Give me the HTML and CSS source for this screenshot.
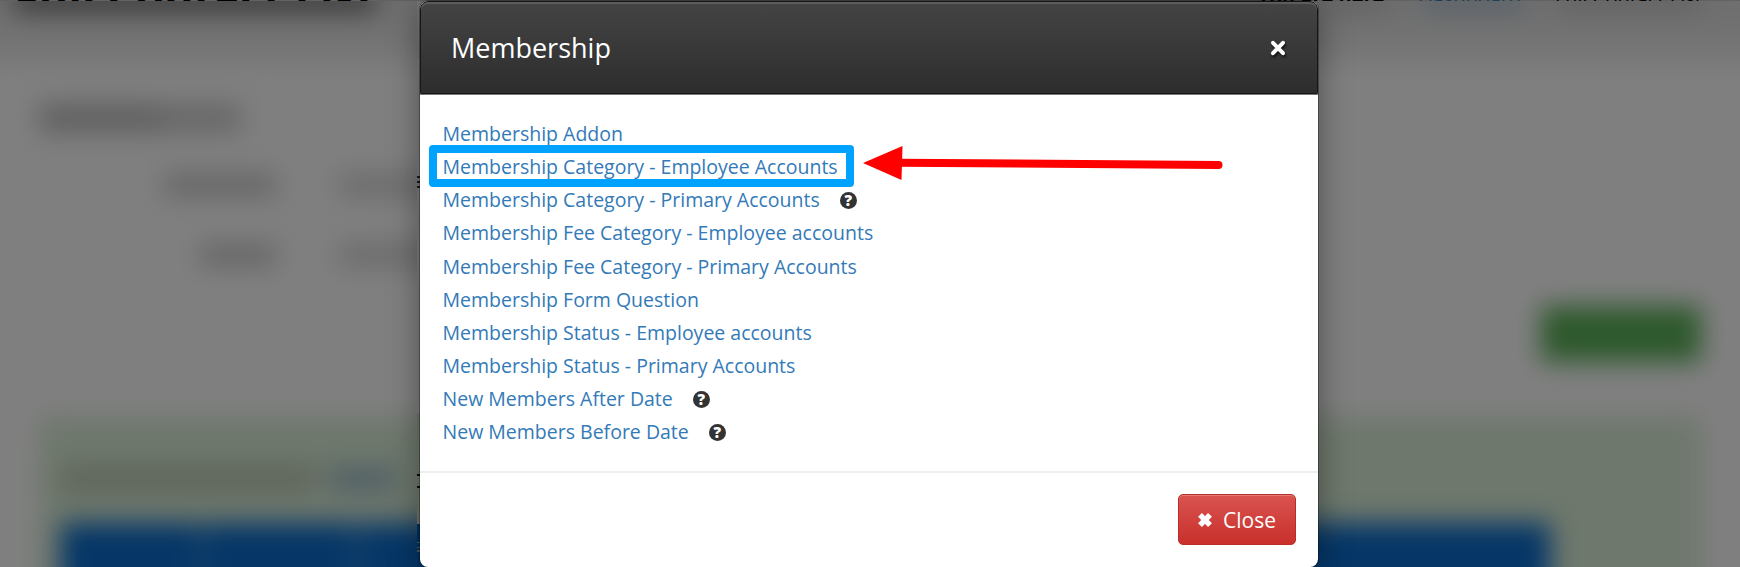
FILE: index.html
```html
<!DOCTYPE html>
<html lang="en">
<head>
    <meta charset="UTF-8">
    <meta name="viewport" content="width=device-width, initial-scale=1.0">
    <title>Membership</title>
    <link rel="stylesheet" href="styles.css">
</head>
<body>
    <!-- page behind the dialog -->
    <div class="page">
        <div class="page-blur">
            <div class="page-header">
                <i class="smudge smudge-title"></i>
                <div class="smudge-path"><i></i><i class="path-link"></i><i></i></div>
            </div>
            <div class="page-content">
                <div class="smudge-heading"><i></i><i></i></div>
                <div class="smudge-row"><i class="smudge"></i><i class="smudge wide"></i></div>
                <div class="smudge-row"><i class="smudge short"></i><i class="smudge wide"></i></div>
                <div class="page-action"></div>
                <div class="page-panel">
                    <div class="panel-text"><i></i><i class="panel-link"></i></div>
                    <div class="panel-table"></div>
                </div>
            </div>
        </div>
        <div class="page-strip">
            <span class="strip-title">Full Contact List</span>
            <span class="strip-path"><b>You are here</b> <span>:</span> <a>Dashboard</a> <span>:</span> Full Contact List</span>
        </div>
        <!-- narrow sharp column along the dialog -->
        <div class="page-edge">
            <span class="edge-field"></span>
            <span class="edge-panel"></span>
            <span class="edge-table"></span>
        </div>
    </div>

    <div class="backdrop">
        <div class="modal">
            <div class="modal-header">
                <h3>Membership</h3>
                <button type="button" class="close-icon" aria-label="Close">
                    <svg width="18" height="18" viewBox="0 0 18 18"><path d="M4 3.8L14 14.2M14 3.8L4 14.2"/></svg>
                </button>
            </div>
            <div class="modal-body">
                <ul class="filter-list">
                    <li><a href="#">Membership Addon</a></li>
                    <li><a href="#" class="marked">Membership Category - Employee Accounts</a></li>
                    <li><a href="#">Membership Category - Primary Accounts</a><span class="help">?</span></li>
                    <li><a href="#">Membership Fee Category - Employee accounts</a></li>
                    <li><a href="#">Membership Fee Category - Primary Accounts</a></li>
                    <li><a href="#">Membership Form Question</a></li>
                    <li><a href="#">Membership Status - Employee accounts</a></li>
                    <li><a href="#">Membership Status - Primary Accounts</a></li>
                    <li><a href="#">New Members After Date</a><span class="help">?</span></li>
                    <li><a href="#">New Members Before Date</a><span class="help">?</span></li>
                </ul>
                <svg class="arrow" width="362" height="36" viewBox="0 0 362 36">
                    <path class="arrow-line" d="M36 17.8L355.5 20"/>
                    <path class="arrow-head" d="M0 18L39.5 1L38.5 35Z"/>
                </svg>
            </div>
            <div class="modal-footer">
                <button type="button" class="btn-close">
                    <svg width="18" height="18" viewBox="0 0 18 18"><path d="M4 3.8L14 14.2M14 3.8L4 14.2"/></svg>
                    Close
                </button>
            </div>
        </div>
    </div>
</body>
</html>
```
FILE: styles.css
```css
* {
    box-sizing: border-box;
}
body {
    margin: 0;
    height: 567px;
    overflow: hidden;
    position: relative;
    background: #fff;
    font-family: "Open Sans", "Liberation Sans", sans-serif;
    font-size: 19.5px;
    color: #333;
}

/* page behind the dialog */
.page {
    height: 567px;
    overflow: hidden;
    position: relative;
    isolation: isolate;
    background: #fff;
}
.page-blur {
    height: 640px;
    filter: blur(13px);
}
.page-header {
    display: flex;
    justify-content: space-between;
    height: 62px;
    margin: 0 -40px;
    padding: 0 80px 0 54px;
    background: linear-gradient(#dcdcdc, #ececec);
    box-shadow: 0 -30px 0 #dcdcdc;
}
.smudge {
    display: block;
    height: 24px;
    width: 112px;
    background: #cecece;
}
.smudge.wide {
    background: #d8d8d8;
}
.smudge-title {
    width: 362px;
    height: 10px;
    background: #444;
    box-shadow: 0 -12px 0 #888;
}
.smudge-path {
    display: flex;
    gap: 36px;
    height: 7px;
}
.smudge-path i {
    width: 140px;
    background: #a0a0a0;
}
.smudge-path .path-link {
    width: 100px;
    background: #6f9cc4;
}
.page-content {
    padding: 41px 39px 0;
}
.smudge-heading {
    display: flex;
    height: 30px;
}
.smudge-heading i {
    width: 122px;
    background: #c2c2c2;
}
.smudge-heading i + i {
    width: 80px;
    background: #d0d0d0;
}
.smudge-row {
    display: flex;
    justify-content: flex-end;
    gap: 63px;
    width: 412px;
    margin-top: 40px;
}
.smudge-row + .smudge-row {
    margin-top: 46px;
}
.smudge-row .short {
    width: 76px;
}
.page-action {
    width: 160px;
    height: 56px;
    margin: 39px 0 0 auto;
    background: #5cb259;
}
.page-panel {
    height: 220px;
    margin-top: 55px;
    padding: 49px 151px 0 22px;
    background: #dcf0d9;
}
.panel-text {
    display: flex;
    gap: 14px;
    height: 26px;
}
.panel-text i {
    width: 254px;
    background: #bec8b5;
}
.panel-text .panel-link {
    width: 68px;
    background: #a4c2cb;
}
.panel-table {
    height: 150px;
    margin-top: 31px;
    background: linear-gradient(90deg, transparent 137px, rgba(255, 255, 255, .25) 137px 144px, transparent 144px 292px, rgba(255, 255, 255, .25) 292px 299px, transparent 299px) #0a6dce;
}

/* sharp first line of the page */
.page-strip {
    position: absolute;
    top: 0;
    left: 0;
    right: 0;
    display: flex;
    justify-content: space-between;
    height: 1px;
    padding: 0 38px 0 14px;
    overflow: hidden;
    background: #c4c4c4;
    color: #000;
    line-height: 30px;
    white-space: nowrap;
}
.strip-title {
    margin-top: -18px;
    font-size: 45px;
    font-weight: bold;
}
.strip-path {
    margin-top: -16px;
    font-size: 20px;
}
.strip-path span {
    margin: 0 9px;
}
.strip-path a {
    color: #337ab7;
}
.page-edge {
    position: absolute;
    top: 1px;
    bottom: 0;
    left: 417px;
    width: 3px;
    padding-top: 175px;
    background: linear-gradient(#eee 58px, #fff 58px);
}
.page-edge span {
    display: block;
}
.edge-field {
    height: 12px;
    background: repeating-linear-gradient(#333 0 2px, #eee 2px 5px);
}
.edge-panel {
    height: 111px;
    margin-top: 225px;
    background: linear-gradient(transparent 61px, #111 61px 63px, transparent 63px 73px, #111 73px 75px, transparent 75px) #dff0d8;
}
.edge-table {
    height: 60px;
    background: linear-gradient(transparent 18px, #9bb 18px 19px, transparent 19px 23px, #9bb 23px 24px, transparent 24px 26px, #9bb 26px 28px, transparent 28px) #0067c8;
}

.backdrop {
    position: absolute;
    inset: 0;
    padding-top: 1px;
    background: rgba(0, 0, 0, .5);
}
.modal {
    display: flex;
    flex-direction: column;
    width: 898px;
    height: 566px;
    margin-left: 420px;
    border-radius: 8px;
    background: #fff;
    box-shadow: 0 0 0 1px rgba(0, 0, 0, .3), 0 5px 32px rgba(0, 0, 0, .4);
}
.modal-header {
    display: flex;
    align-items: center;
    justify-content: space-between;
    height: 93px;
    padding: 0 30px 0 30px;
    border: 1px solid #161616;
    border-radius: 8px 8px 0 0;
    background: linear-gradient(#444, #2d2d2d);
    box-shadow: inset 0 2px 0 #5c5c5c, 0 1px 0 #777;
}
.modal-header h3 {
    margin: 0;
    font-size: 27px;
    font-weight: 400;
    color: #fff;
}
.close-icon {
    padding: 0;
    border: 0;
    margin-top: 1px;
    background: none;
    cursor: pointer;
    line-height: 0;
}
.close-icon svg, .btn-close svg {
    fill: none;
    stroke: #fff;
}
.close-icon svg {
    stroke-linecap: round;
    stroke-width: 4;
    filter: drop-shadow(1px 2px 1px #111);
}
.btn-close svg {
    flex: none;
    stroke-width: 5.4;
}

.modal-body {
    position: relative;
    height: 377px;
    padding: 23px 23px 22px 22.5px;
}
.filter-list {
    margin: 0;
    padding: 0;
    list-style: none;
}
.filter-list li {
    display: flex;
    align-items: center;
    height: 33.15px;
}
.filter-list a {
    position: relative;
    color: #337ab7;
    text-decoration: none;
}
.marked::after {
    content: "";
    position: absolute;
    box-sizing: border-box;
    top: -8px;
    left: -13.5px;
    width: 425px;
    height: 42px;
    border: 8px solid #00a2ff;
    border-radius: 4px;
}
.help {
    width: 17px;
    height: 17px;
    margin: 1px 0 0 20px;
    border-radius: 50%;
    background: #333;
    color: #fff;
    font-size: 15px;
    font-weight: 800;
    line-height: 17px;
    text-align: center;
}
/* arrow pointing at the marked link */
.arrow {
    position: absolute;
    left: 443px;
    top: 51px;
}
.arrow-line {
    fill: none;
    stroke: #f00;
    stroke-width: 8;
    stroke-linecap: round;
}
.arrow-head {
    fill: #f00;
}

.modal-footer {
    display: flex;
    justify-content: flex-end;
    padding: 21px 22px;
    border-top: 2px solid #efefef;
}
.btn-close {
    display: flex;
    align-items: center;
    gap: 9px;
    width: 118px;
    height: 51px;
    padding: 0 17px;
    border: 1px solid #b92c28;
    border-radius: 5px;
    background: linear-gradient(#d9534f, #c9302c);
    box-shadow: inset 0 1px 0 #e27c79;
    color: #fff;
    font-family: inherit;
    font-size: 21px;
    cursor: pointer;
}
```
